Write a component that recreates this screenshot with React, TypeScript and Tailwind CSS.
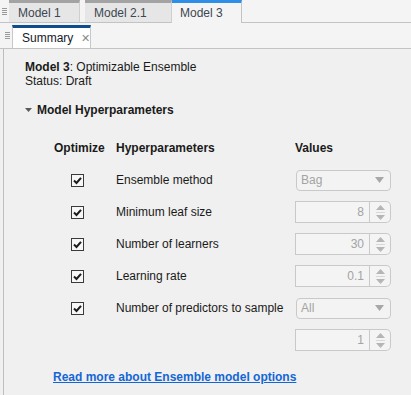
import React from "react";

const Grip = () => (
  <div className="flex flex-col gap-[1px]">
    {[0, 1, 2, 3].map((i) => (
      <div key={i} className="w-[5px] h-[1px] bg-[#9a9a9a]" />
    ))}
  </div>
);

const Check = () => (
  <div className="w-[13px] h-[13px] border border-[#3a3a3a] bg-[#f7f7f7] flex items-center justify-center">
    <svg width="11" height="11" viewBox="0 0 11 11">
      <path d="M2 5.5 L4.5 8 L9 2.8" fill="none" stroke="#1a1a1a" strokeWidth="2" />
    </svg>
  </div>
);

const Dropdown = ({ value }: { value: string }) => (
  <div className="w-[95px] h-[21px] ml-[1px] rounded-[4px] border border-[#c9c9c9] bg-[#f3f3f3] flex items-center justify-between pl-[4px] pr-[6px] text-[#a3a3a3]">
    <span>{value}</span>
    <svg width="9" height="6" viewBox="0 0 9 6">
      <path d="M0 0 L9 0 L4.5 6 Z" fill="#a8a8a8" />
    </svg>
  </div>
);

const Spinner = ({ value }: { value: string }) => (
  <div className="w-[96px] h-[22px] flex">
    <div className="w-[75px] h-full border border-[#c9c9c9] bg-[#f4f4f4] flex items-center justify-end pr-[5px] text-[#a3a3a3]">
      {value}
    </div>
    <div className="w-[21px] h-full border border-l-0 border-[#c9c9c9] rounded-r-[5px] bg-[#f4f4f4] flex flex-col items-center justify-center gap-[2px]">
      <svg width="9" height="5" viewBox="0 0 9 5">
        <path d="M0 5 L9 5 L4.5 0 Z" fill="#b5b5b5" />
      </svg>
      <div className="w-[9px] h-[1px] bg-[#d8d8d8]" />
      <svg width="9" height="5" viewBox="0 0 9 5">
        <path d="M0 0 L9 0 L4.5 5 Z" fill="#b5b5b5" />
      </svg>
    </div>
  </div>
);

const rows: { label: string; control: React.ReactNode }[] = [
  { label: "Ensemble method", control: <Dropdown value="Bag" /> },
  { label: "Minimum leaf size", control: <Spinner value="8" /> },
  { label: "Number of learners", control: <Spinner value="30" /> },
  { label: "Learning rate", control: <Spinner value="0.1" /> },
  { label: "Number of predictors to sample", control: <Dropdown value="All" /> },
];

export default function App() {
  return (
    <div
      className="w-[411px] h-[395px] overflow-hidden bg-[#f0f0f0] text-[12px] leading-[14px] text-[#1a1a1a] flex flex-col"
      style={{ fontFamily: '"Liberation Sans", Arial, sans-serif' }}
    >
      {/* document tab strip */}
      <div className="h-[23px] flex bg-[#f4f4f4] shrink-0">
        <div className="w-[9px] border-b border-[#c3c3c3] flex items-center pl-[2px]">
          <Grip />
        </div>
        <div className="w-[71px] border-t-[3px] border-t-[#a3a3a3] border-b border-b-[#c3c3c3] border-r border-r-[#cfcfcf] bg-[#e6e6e6] flex items-center pl-[9px] text-[#3d4652]">
          Model 1
        </div>
        <div className="w-[5px] border-b border-[#c3c3c3]" />
        <div className="w-[87px] border-t-[3px] border-t-[#a3a3a3] border-b border-b-[#c3c3c3] border-r border-r-[#cfcfcf] bg-[#e6e6e6] flex items-center pl-[9px] text-[#3d4652]">
          Model 2.1
        </div>
        <div className="w-[70px] border-t-[3px] border-t-[#2f8fe6] border-r border-r-[#c3c3c3] bg-[#f4f4f4] flex items-center pl-[8px] text-[#3d4652]">
          Model 3
        </div>
        <div className="flex-1 border-b border-[#c3c3c3]" />
      </div>

      {/* panel tab row */}
      <div className="h-[26px] flex items-end bg-[#f4f4f4] border-b border-[#c3c3c3] shrink-0">
        <div className="w-[12px] h-full flex items-center pl-[5px]">
          <Grip />
        </div>
        <div className="w-[79px] h-[23px] border-t-[3px] border-t-[#0f4c8c] border-x border-x-[#c8c8c8] bg-white flex items-center pl-[9px] gap-[8px]">
          <span className="text-[#141a2a]">Summary</span>
          <span className="text-[#8a8a8a] text-[11px]">✕</span>
        </div>
      </div>

      {/* content */}
      <div className="flex-1 ml-[3px] border-l border-[#bdbdbd] pl-[21px] pt-[11px] flex flex-col">
        <div>
          <span className="font-bold">Model 3</span>: Optimizable Ensemble
        </div>
        <div>Status: Draft</div>

        <div className="mt-[15px] flex items-center gap-[5px]">
          <svg width="7" height="4" viewBox="0 0 7 4">
            <path d="M0 0 L7 0 L3.5 4 Z" fill="#5a5a5a" />
          </svg>
          <span className="font-bold">Model Hyperparameters</span>
        </div>

        <div className="mt-[15px] ml-[29px] grid grid-cols-[62px_179px_96px] auto-rows-[32px] items-center">
          <div className="font-bold">Optimize</div>
          <div className="font-bold">Hyperparameters</div>
          <div className="font-bold">Values</div>
          {rows.map((r) => (
            <React.Fragment key={r.label}>
              <div className="pl-[17px]">
                <Check />
              </div>
              <div>{r.label}</div>
              <div>{r.control}</div>
            </React.Fragment>
          ))}
          <div />
          <div />
          <div>
            <Spinner value="1" />
          </div>
        </div>

        <div className="mt-[14px] ml-[28px]">
          <a className="font-bold text-[#1466d6] underline cursor-pointer">
            Read more about Ensemble model options
          </a>
        </div>
      </div>
    </div>
  );
}
